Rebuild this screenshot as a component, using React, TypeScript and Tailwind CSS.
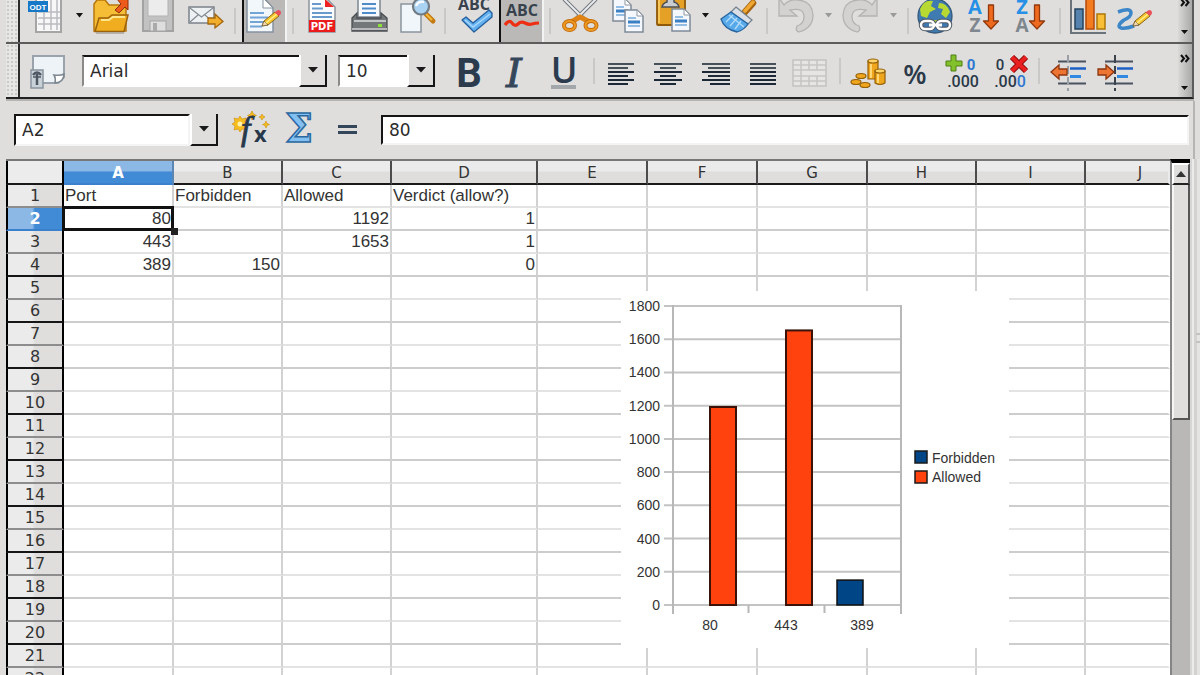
import React from "react";

const COLUMNS = ["A", "B", "C", "D", "E", "F", "G", "H", "I", "J"];
const ROW_COUNT = 40;

const CELLS: Record<string, string> = {
  A1: "Port", B1: "Forbidden", C1: "Allowed", D1: "Verdict (allow?)",
  A2: "80", C2: "1192", D2: "1",
  A3: "443", C3: "1653", D3: "1",
  A4: "389", B4: "150", D4: "0",
};

type IconProps = { x: number; y?: number; h?: number; children: React.ReactNode };

/* x and y set the origin of the toolbar's drawing space for this icon. */
function Icon({ x, y = 0, h = 42, children }: IconProps) {
  return (
    <svg className="block shrink-0" width="47" height={h} viewBox={`${x} ${y} 47 ${h}`} fill="none" aria-hidden="true">
      {children}
    </svg>
  );
}

function Tool({ label, pressed = false, children }: { label: string; pressed?: boolean; children: React.ReactNode }) {
  return (
    <button
      type="button"
      aria-label={label}
      aria-pressed={pressed || undefined}
      className={
        pressed
          ? "h-full w-[47px] shrink-0 bg-[linear-gradient(90deg,#dfdedd_2px,#111_2px,#111_4px,#bab9b8_4px,#bab9b8_45px,#f3f3f3_45px)]"
          : "h-full w-[47px] shrink-0"
      }
    >
      {children}
    </button>
  );
}

function Drop({ label, dim = false }: { label: string; dim?: boolean }) {
  return (
    <button type="button" aria-label={label} className="flex h-full w-[18px] shrink-0 items-start justify-center pt-[13px]">
      <svg width="7" height="5" viewBox="0 0 7 5" aria-hidden="true">
        <path d="M0 0H7L3.5 4.5Z" fill={dim ? "#9a9a9a" : "#151515"} />
      </svg>
    </button>
  );
}

function Sep() {
  return (
    <div className="flex h-full w-[11px] shrink-0 items-center justify-center">
      <div className="h-[26px] w-[2px] bg-[#c9c8c7]" />
    </div>
  );
}

function Grip() {
  return (
    <div className="w-[14px] shrink-0 border-r-2 border-[#2a2a2a] bg-[#e6e6e5] bg-[radial-gradient(#c9c9c8_1px,transparent_1px)] bg-[length:4px_4px]" />
  );
}

function Overflow({ low = false }: { low?: boolean }) {
  return (
    <button
      type="button"
      aria-label="More controls"
      className="ml-auto h-full w-[14px] shrink-0 bg-[linear-gradient(90deg,#d9d9d8,#a9a9a8)]"
    >
      <svg className="block" width="14" height={low ? 52 : 42} viewBox={low ? "0 44 14 52" : "0 0 14 42"} fill="none" aria-hidden="true">
        <path
          d={low ? "M3 54l3 3.5-3 3.5M7.500 54l3 3.5-3 3.500" : "M3-1l3 3.5-3 3.500M7.500-1l3 3.5-3 3.500"}
          stroke="#111"
          strokeWidth="2"
        />
        <path d={low ? "M3 85H10L6.500 89Z" : "M3 30H10L6.500 34Z"} fill="#111" />
      </svg>
    </button>
  );
}

function ArrowFace() {
  return (
    <span className="pointer-events-none flex w-7 shrink-0 items-center justify-center border-r-2 border-b-2 border-l-2 border-[#151515] border-l-white bg-[#dfdedd]">
      <svg width="10" height="6" viewBox="0 0 10 6" aria-hidden="true">
        <path d="M0 0H10L5 5.500Z" fill="#1a1a1a" />
      </svg>
    </span>
  );
}

function Combo({ label, value, wide = false }: { label: string; value: string; wide?: boolean }) {
  return (
    <div className={wide ? "grid h-8 w-[245px] shrink-0" : "grid h-8 w-[97px] shrink-0"}>
      <select
        aria-label={label}
        defaultValue={value}
        className="col-start-1 row-start-1 appearance-none border-2 border-[#8a8a8a] border-t-[#151515] border-r-white border-b-white bg-white pl-[6px] font-['DejaVu_Sans',sans-serif] text-[17px] leading-6 text-[#2c2c2c] outline-none"
      >
        <option>{value}</option>
      </select>
      <div className="pointer-events-none col-start-1 row-start-1 flex justify-end">
        <ArrowFace />
      </div>
    </div>
  );
}

function MiniPage({ x, y }: { x: number; y: number }) {
  return (
    <g>
      <path d={`M${x} ${y}h12l6 6v16h-18z`} fill="#f4f8fc" stroke="#7f8b98" strokeWidth="1.5" />
      <path d={`M${x + 12} ${y}v6h6z`} fill="#fff" stroke="#8d98a4" />
      <path d={`M${x + 3} ${y + 8}h8M${x + 3} ${y + 16}h12`} stroke="#74a9dc" strokeWidth="1.500" />
      <path d={`M${x + 3} ${y + 12}h12`} stroke="#3b7fc4" strokeWidth="3" />
    </g>
  );
}

function Pencil({ x, y }: { x: number; y: number }) {
  return (
    <g transform={`translate(${x} ${y})`}>
      <path d="M0 16L2 11L13 2L17 6L6 15Z" fill="#f6c32c" stroke="#8c6a18" />
      <path d="M0 16L2 11L6 15Z" fill="#f1d9b0" stroke="#66543a" strokeWidth=".7" />
      <path d="M4 13L15 4" stroke="#fff08a" strokeWidth="1.500" />
      <path d="M12.500 2.500L15 .5Q17-1 18.500 1.200Q20 3.500 17 6Z" fill="#e8505c" />
    </g>
  );
}

function DownArrow({ x }: { x: number }) {
  return (
    <path
      d={`M${x - 2.500} 5h5v16h5l-7.500 8l-7.500-8h5z`}
      fill="#ee6a1e"
      stroke="#92390d"
      strokeWidth="1.300"
      strokeLinejoin="round"
    />
  );
}

function StandardBar() {
  return (
    <div role="toolbar" aria-label="Standard" className="flex h-[42px] min-w-0 grow items-start overflow-hidden pl-[3px]">
      <Tool label="New">
        <Icon x={23}>
          <rect x="36" y="-2" width="25" height="34" fill="#f7f7f7" stroke="#a5a5a5" strokeWidth="2" />
          <path d="M38 12H60M38 18H60M38 24H60M44 0V30M51 0V30M57 0V30" stroke="#b9bcc0" strokeWidth="1.500" />
          <rect x="28" y="1" width="20" height="11" fill="#1778c8" />
          <text x="38" y="10" textAnchor="middle" fontFamily="Liberation Sans, sans-serif" fontWeight="700" fontSize="8" fill="#fff">ODT</text>
        </Icon>
      </Tool>
      <Drop label="New options" />
      <Tool label="Open">
        <Icon x={88}>
          <path d="M94 31V4L97 0H105L109 5H126V31Z" fill="#f4bd35" stroke="#b8770c" strokeWidth="1.500" />
          <path d="M95 31.500L99 18H108L112 15H128L124 31.500Z" fill="#f0ad20" stroke="#9c620a" strokeWidth="1.500" />
          <path d="M101 20H109L113 17H125" stroke="#ffe58c" strokeWidth="2" />
          <path d="M96 33H124" stroke="#a8a29a" strokeWidth="1.500" />
          <path d="M115 10L121 4L117-1H128V10L125 7L119 13Z" fill="#ec5a1c" stroke="#8e2d0a" />
        </Icon>
      </Tool>
      <Tool label="Save">
        <Icon x={135}>
          <path d="M143-2H173V31H143Z" fill="#c2c2c2" stroke="#a2a2a2" strokeWidth="2" />
          <rect x="148" y="-2" width="20" height="18" fill="#ececec" stroke="#b3b3b3" />
          <rect x="150" y="21" width="16" height="10" fill="#dedede" stroke="#a6a6a6" />
          <rect x="153" y="23" width="4" height="8" fill="#aaa" />
        </Icon>
      </Tool>
      <Tool label="Send by e-mail">
        <Icon x={182}>
          <rect x="189" y="7" width="25" height="16" fill="#eef1f3" stroke="#7b8289" strokeWidth="1.500" />
          <path d="M190 8L201.500 17L213 8M190 22L198 15M213 22L205 15" stroke="#838b93" strokeWidth="1.200" />
          <path d="M208 18H215V14L223 21.500L215 28V24H208Z" fill="#f0ae2c" stroke="#a3650e" strokeWidth="1.300" />
        </Icon>
      </Tool>
      <Sep />
      <Tool label="Edit file" pressed>
        <Icon x={240}>
          <path d="M247-2H264L273 8V32H247Z" fill="#f2f7fc" stroke="#8793a0" strokeWidth="1.500" />
          <path d="M263-2V8H273Z" fill="#fff" stroke="#8793a0" />
          <path d="M250 13H264M250 17.500H268M250 22H268M250 26.500H262" stroke="#72a4d6" strokeWidth="1.800" />
          <Pencil x={262} y={10} />
        </Icon>
      </Tool>
      <Sep />
      <Tool label="Export as PDF">
        <Icon x={298}>
          <path d="M309-2H326L335 7V32H309Z" fill="#fbfcfd" stroke="#8c949c" strokeWidth="1.500" />
          <path d="M325-1V7H334Z" fill="#ee2222" />
          <path d="M312 4H321M312 8.500H323M312 13H332M312 17H332" stroke="#6a99cc" strokeWidth="1.800" />
          <rect x="309" y="20" width="26" height="12" fill="#ea1c1c" />
          <text x="322" y="30" textAnchor="middle" fontFamily="DejaVu Sans, sans-serif" fontWeight="700" fontSize="10" fill="#fff">PDF</text>
        </Icon>
      </Tool>
      <Tool label="Print">
        <Icon x={345}>
          <path d="M358 17V-2H380V17Z" fill="#f7fafd" stroke="#7d8790" strokeWidth="1.500" />
          <path d="M362 4H376M362 8.500H376M362 13H376" stroke="#4e8cc9" strokeWidth="1.800" />
          <path d="M352 18L357 13V18H381V13L387 18V31H352Z" fill="#73777a" stroke="#4b4e51" strokeWidth="1.300" />
          <path d="M354 21H386" stroke="#c2c5c7" strokeWidth="2" />
          <path d="M352 29H387" stroke="#b6b8ba" strokeWidth="2" />
          <rect x="378" y="24" width="4" height="3" fill="#8de03a" />
        </Icon>
      </Tool>
      <Tool label="Page preview">
        <Icon x={392}>
          <rect x="401" y="4" width="20" height="28" fill="#f1f6fb" stroke="#8b949d" strokeWidth="1.500" />
          <path d="M426 14L433 21" stroke="#c27a11" strokeWidth="5" strokeLinecap="round" />
          <path d="M426 14L432 20" stroke="#f6b83c" strokeWidth="2" />
          <circle cx="421" cy="6.500" r="8" fill="#a9d2f3" stroke="#727b84" strokeWidth="2.200" />
          <path d="M416 6Q418 1 424 2" stroke="#f4faff" strokeWidth="2.500" />
        </Icon>
      </Tool>
      <Sep />
      <Tool label="Spelling and grammar">
        <Icon x={450}>
          <text x="474" y="10" textAnchor="middle" fontFamily="Open Sans, sans-serif" fontWeight="700" fontSize="16" fill="#38424c">ABC</text>
          <path d="M462 20L466 17L473 23L489 10L492 13V17L474 32Z" fill="#63b0f0" stroke="#245f9c" strokeWidth="1.300" strokeLinejoin="round" />
          <path d="M465 20L473 27L490 14" stroke="#a9d7fb" strokeWidth="1.500" />
        </Icon>
      </Tool>
      <Tool label="Automatic spell check" pressed>
        <Icon x={497}>
          <text x="522" y="16" textAnchor="middle" fontFamily="Open Sans, sans-serif" fontWeight="700" fontSize="16" fill="#38424c">ABC</text>
          <path d="M505 25Q509 19 512 23T518 24T525 23T532 24T539 23" stroke="#ee2e12" strokeWidth="3.200" />
        </Icon>
      </Tool>
      <Sep />
      <Tool label="Cut">
        <Icon x={555}>
          <path d="M564-1L585 20M596-1L575 20" stroke="#74797e" strokeWidth="4" />
          <path d="M564-1L584 19M596-1L576 19" stroke="#e8eaec" strokeWidth="2" />
          <path d="M571 22L580 17L590 22" stroke="#df8414" strokeWidth="5" />
          <ellipse cx="569.500" cy="25.500" rx="5.500" ry="4.500" stroke="#c56d0c" strokeWidth="4" />
          <ellipse cx="591" cy="25.500" rx="5.500" ry="4.500" stroke="#c56d0c" strokeWidth="4" />
          <ellipse cx="569.500" cy="25.500" rx="5.500" ry="4.500" stroke="#ee9a22" strokeWidth="2" />
          <ellipse cx="591" cy="25.500" rx="5.500" ry="4.500" stroke="#ee9a22" strokeWidth="2" />
        </Icon>
      </Tool>
      <Tool label="Copy">
        <Icon x={602}>
          <MiniPage x={613} y={-1} />
          <MiniPage x={625} y={10} />
        </Icon>
      </Tool>
      <Tool label="Paste">
        <Icon x={649}>
          <rect x="657" y="-2" width="28" height="27" rx="1" fill="#e5a125" stroke="#8f5908" strokeWidth="1.800" />
          <path d="M659 0V23" stroke="#ffd36a" strokeWidth="1.500" />
          <path d="M662 7Q663 3 667 2V-2H674V2Q678 3 679 7Z" fill="#c9cdd1" stroke="#4c5157" strokeWidth="1.500" />
          <MiniPage x={672} y={9} />
        </Icon>
      </Tool>
      <Drop label="Paste options" />
      <Tool label="Clone formatting">
        <Icon x={714}>
          <path d="M745 12L753 3" stroke="#a66410" strokeWidth="6.500" strokeLinecap="round" />
          <path d="M745 11L753 2" stroke="#f0a832" strokeWidth="3.500" strokeLinecap="round" />
          <path d="M736 7L752 20L747 25L731 12Z" fill="#d9dfe4" stroke="#76818b" strokeWidth="1.300" />
          <path d="M731 12L721 19Q724 29 737 32Q744 30 748 24Z" fill="#58a9ea" stroke="#28649f" strokeWidth="1.300" />
          <path d="M733 15L726 22M737 18L730 26M741 21L735 29M729 15L744 27" stroke="#b2dcfb" strokeWidth="1.300" />
        </Icon>
      </Tool>
      <Sep />
      <Tool label="Undo">
        <Icon x={772}>
          <path d="M779-2V16H797L790 10Q804 7 804 17Q804 24 797 26Q795 31 799 32Q813 28 813 15Q812 1 798 0Q789-1 784 5Z" fill="#d3d2d1" stroke="#b4b3b2" strokeWidth="1.300" />
        </Icon>
      </Tool>
      <Drop label="Undo history" dim />
      <Tool label="Redo">
        <Icon x={837}>
          <path d="M877-2V16H859L866 10Q852 7 852 17Q852 24 859 26Q861 31 857 32Q843 28 843 15Q844 1 858 0Q867-1 872 5Z" fill="#d3d2d1" stroke="#b4b3b2" strokeWidth="1.300" />
        </Icon>
      </Tool>
      <Drop label="Redo history" dim />
      <Sep />
      <Tool label="Hyperlink">
        <Icon x={913}>
          <circle cx="935" cy="16" r="17" fill="#3f7ab0" stroke="#355a7c" strokeWidth="1.300" />
          <path d="M920 9Q924-1 933 1L931 6L936 9L930 12L927 18L921 16ZM939 3Q947 3 950 12L946 18L941 14L943 9L938 8Z" fill="#b7d932" />
          <path d="M933 20H940L937 28Z" fill="#a3cd38" />
          <rect x="921" y="21" width="13" height="8" rx="4" stroke="#4f5a64" strokeWidth="4.500" />
          <rect x="937" y="21" width="13" height="8" rx="4" stroke="#4f5a64" strokeWidth="4.500" />
          <rect x="921" y="21" width="13" height="8" rx="4" stroke="#fff" strokeWidth="2.500" />
          <rect x="937" y="21" width="13" height="8" rx="4" stroke="#fff" strokeWidth="2.500" />
          <path d="M929 25H942" stroke="#fff" strokeWidth="3" />
        </Icon>
      </Tool>
      <Tool label="Sort ascending">
        <Icon x={960}>
          <text x="975" y="14" textAnchor="middle" fontFamily="Open Sans, sans-serif" fontWeight="700" fontSize="20" fill="#2690e6">A</text>
          <text x="975" y="32" textAnchor="middle" fontFamily="Open Sans, sans-serif" fontWeight="700" fontSize="19" fill="#7e868e">Z</text>
          <DownArrow x={991} />
        </Icon>
      </Tool>
      <Tool label="Sort descending">
        <Icon x={1007}>
          <text x="1022" y="14" textAnchor="middle" fontFamily="Open Sans, sans-serif" fontWeight="700" fontSize="20" fill="#2690e6">Z</text>
          <text x="1022" y="32" textAnchor="middle" fontFamily="Open Sans, sans-serif" fontWeight="700" fontSize="19" fill="#7e868e">A</text>
          <DownArrow x={1037} />
        </Icon>
      </Tool>
      <Sep />
      <Tool label="Insert chart">
        <Icon x={1065}>
          <path d="M1071-2V33H1106" stroke="#6b737b" strokeWidth="2" />
          <rect x="1075" y="9" width="8" height="20" fill="#5683ad" stroke="#24435f" strokeWidth="1.500" />
          <rect x="1086" y="-2" width="8" height="31" fill="#f47c20" stroke="#b64a08" strokeWidth="1.500" />
          <rect x="1097" y="14" width="8" height="15" fill="#f8bf36" stroke="#ae7708" strokeWidth="1.500" />
        </Icon>
      </Tool>
      <Tool label="Show draw functions">
        <Icon x={1112}>
          <path d="M1118 12Q1131 7 1131 13Q1131 17 1124 20Q1116 26 1121 28Q1126 29 1134 26" stroke="#3d87c9" strokeWidth="3.500" />
          <Pencil x={1133} y={10} />
        </Icon>
      </Tool>
      <Overflow />
    </div>
  );
}

const ALIGN: { label: string; x: number; left: number[]; right: number[] }[] = [
  { label: "Align left", x: 597, left: [608, 608, 608, 608, 608, 608], right: [634, 628, 634, 628, 634, 628] },
  { label: "Align centre", x: 644, left: [654, 660, 654, 660, 654, 660], right: [682, 676, 682, 676, 682, 676] },
  { label: "Align right", x: 691, left: [702, 708, 702, 708, 702, 710], right: [730, 730, 730, 730, 730, 730] },
  { label: "Justify", x: 738, left: [750, 750, 750, 750, 750, 750], right: [776, 776, 776, 776, 776, 776] },
];

function Indent({ x, out = false }: { x: number; out?: boolean }) {
  return (
    <g>
      <path d={`M${x - 10} 60.500h28M${x - 10} 82.500h28`} stroke="#4a5360" strokeWidth="2" />
      <path d={`M${x + 2} 67.500h16`} stroke="#1d5fc4" strokeWidth="2.500" />
      <path d={`M${x + 2} 75.500h11`} stroke="#3089e0" strokeWidth="3" />
      <path d={`M${x} 54v36`} stroke={out ? "#9aa0a6" : "#3a424b"} strokeWidth="2" strokeDasharray="8 3" />
      <path
        d={out ? `M${x - 17} 71l8-7v4h8v6h-8v4z` : `M${x - 1} 71l-8-7v4h-8v6h8v4z`}
        fill="#ee7433"
        stroke="#8c3610"
        strokeWidth="1.300"
      />
    </g>
  );
}

function FormattingBar() {
  const row = { y: 44, h: 52 };
  return (
    <div role="toolbar" aria-label="Formatting" className="flex h-[53px] min-w-0 grow items-center overflow-hidden pl-[3px]">
      <Tool label="Styles and formatting">
        <Icon x={23} {...row}>
          <path d="M33 55H64V76L58 82H33Z" fill="#eef3f8" stroke="#9aa3ac" strokeWidth="2" />
          <path d="M55 82Q56 77 54 74Q60 75 64 73Q64 81 55 82Z" fill="#fff" stroke="#7d8790" strokeWidth="1.500" />
          <rect x="31" y="69" width="12" height="18" fill="#c8d0d8" stroke="#8a949e" strokeWidth="1.500" />
          <path d="M33 74Q37 69 41 74M37 73V84" stroke="#4c5762" strokeWidth="2.500" />
          <path d="M33 76H41" stroke="#4c5762" strokeWidth="1.500" />
        </Icon>
      </Tool>
      <div className="flex shrink-0 gap-[11px] px-3">
        <Combo label="Font name" value="Arial" wide />
        <Combo label="Font size" value="10" />
      </div>
      <Tool label="Bold">
        <Icon x={447} {...row}>
          <text x="469" y="86" textAnchor="middle" fontFamily="Roboto, sans-serif" fontWeight="700" fontSize="40" fill="#2b3b4d">B</text>
        </Icon>
      </Tool>
      <Tool label="Italic">
        <Icon x={494} {...row}>
          <text x="514" y="86" textAnchor="middle" fontFamily="DejaVu Serif, serif" fontStyle="italic" fontSize="40" fill="#36465a" stroke="#36465a" strokeWidth="1">I</text>
        </Icon>
      </Tool>
      <Tool label="Underline">
        <Icon x={541} {...row}>
          <text x="564" y="82" textAnchor="middle" fontFamily="Open Sans, sans-serif" fontWeight="600" fontSize="36" fill="#2b3b4d">U</text>
          <rect x="551" y="84" width="25" height="4" fill="#a2a7ac" />
        </Icon>
      </Tool>
      <Sep />
      {ALIGN.map((a) => (
        <Tool key={a.label} label={a.label}>
          <Icon x={a.x + 2} {...row}>
            {a.left.map((l, i) => (
              <path key={i} d={`M${l} ${63 + i * 4}H${a.right[i]}`} stroke={i < 2 ? "#465057" : "#1c2836"} strokeWidth="2" />
            ))}
          </Icon>
        </Tool>
      ))}
      <Tool label="Merge and centre cells">
        <Icon x={787} {...row}>
          <rect x="793" y="59" width="33" height="26" fill="#e6e5e4" stroke="#c3c2c1" strokeWidth="1.500" />
          <path d="M793 64H826M793 69H826M793 75H826M793 80H826M801 59V85M809 59V69M809 75V85M817 59V69M817 75V85" stroke="#c6c5c4" strokeWidth="1.500" />
        </Icon>
      </Tool>
      <Sep />
      <Tool label="Currency format">
        <Icon x={845} {...row}>
          <g fill="#efa51c" stroke="#94600a" strokeWidth="1.200">
            <path d="M868 60V78H878V60Z" />
            <ellipse cx="873" cy="60" rx="5" ry="2" fill="#ffd468" />
            <path d="M875 70V82Q880 85 885 82V70Z" />
            <ellipse cx="880" cy="70" rx="5" ry="2" fill="#ffd468" />
            <ellipse cx="861" cy="75" rx="5" ry="2.500" />
            <ellipse cx="856" cy="81" rx="5" ry="2.500" />
            <ellipse cx="865" cy="84" rx="5" ry="2.500" />
          </g>
          <path d="M871 63V77M878 73V82" stroke="#ffd875" strokeWidth="2" />
        </Icon>
      </Tool>
      <Tool label="Percent format">
        <Icon x={892} {...row}>
          <text x="915" y="83" textAnchor="middle" fontFamily="Open Sans, sans-serif" fontWeight="600" fontSize="27" fill="#2b3948">%</text>
        </Icon>
      </Tool>
      <Tool label="Add decimal place">
        <Icon x={939} {...row}>
          <path d="M951 54H956V60H962V65H956V70H951V65H946V60H951Z" fill="#82c02c" stroke="#4e7e12" />
          <text x="971" y="69" textAnchor="middle" fontFamily="Roboto, sans-serif" fontWeight="700" fontSize="15" fill="#2f78d0">0</text>
          <text x="963" y="86" textAnchor="middle" fontFamily="Roboto, sans-serif" fontWeight="500" fontSize="16" fill="#2b3948">.000</text>
        </Icon>
      </Tool>
      <Tool label="Delete decimal place">
        <Icon x={986} {...row}>
          <text x="1000" y="69" textAnchor="middle" fontFamily="Roboto, sans-serif" fontWeight="500" fontSize="15" fill="#2b3948">0</text>
          <path d="M1012 56L1026 70M1026 56L1012 70" stroke="#8e0b0b" strokeWidth="6" />
          <path d="M1012 56L1026 70M1026 56L1012 70" stroke="#e82020" strokeWidth="4" />
          <text x="1010" y="86" textAnchor="middle" fontFamily="Roboto, sans-serif" fontWeight="500" fontSize="16" fill="#2b3948">
            .00<tspan fill="#2f78d0">0</tspan>
          </text>
        </Icon>
      </Tool>
      <Sep />
      <Tool label="Decrease indent">
        <Icon x={1044} {...row}><Indent x={1068} out /></Icon>
      </Tool>
      <Tool label="Increase indent">
        <Icon x={1091} {...row}><Indent x={1115} /></Icon>
      </Tool>
      <Overflow low />
    </div>
  );
}

function FormulaBar() {
  const row = { y: 106, h: 50 };
  const field = "min-w-0 border-2 border-[#151515] border-r-[#f4f4f4] border-b-[#f4f4f4] bg-white pl-[6px] font-['DejaVu_Sans',sans-serif] text-[17px] leading-6 text-[#2c2c2c] outline-none";
  return (
    <div className="mr-[5px] ml-[6px] flex h-[58px] shrink-0 items-center border-r-2 border-[#b5b4b3] pr-1 pl-2">
      <div className="flex h-8 w-[204px] shrink-0">
        <input aria-label="Name box" defaultValue="A2" className={`${field} grow`} />
        <button type="button" aria-label="Choose range" className="flex"><ArrowFace /></button>
      </div>
      <div className="flex px-[11px]">
        <Tool label="Function wizard">
          <Icon x={229} {...row}>
            <g fill="#f7bd1e" stroke="#c98d0a" strokeWidth=".6">
              <path d="M240 117l2 3 4-1-1 4 3 2-3 2 1 4-4-1-2 3-2-3-4 1 1-4-3-2 3-2-1-4 4 1z" />
              <path d="M252 112l1.500 3 3 1.500-3 1.500-1.500 3-1.500-3-3-1.500 3-1.500zM262 115l1 2 2 1-2 1-1 2-1-2-2-1 2-1zM266 122l1 2.500 2.500 1-2.500 1-1 2.500-1-2.500-2.500-1 2.500-1z" />
            </g>
            <circle cx="240" cy="125" r="2.500" fill="#fff3b0" />
            <text x="241" y="141" fontFamily="Liberation Serif, serif" fontStyle="italic" fontSize="34" fill="#27384a" stroke="#27384a" strokeWidth=".8">f</text>
            <text x="254" y="143" fontFamily="Open Sans, sans-serif" fontWeight="700" fontSize="22" fill="#27384a">x</text>
          </Icon>
        </Tool>
        <Tool label="Sum">
          <Icon x={276} {...row}>
            <text x="299" y="143" textAnchor="middle" fontFamily="DejaVu Serif, serif" fontWeight="700" fontSize="39" fill="#83bff0" stroke="#2a689f" strokeWidth="1.500">Σ</text>
          </Icon>
        </Tool>
        <Tool label="Function">
          <Icon x={323} {...row}>
            <rect x="338" y="126" width="19" height="3" fill="#34465a" />
            <rect x="338" y="132" width="19" height="3" fill="#34465a" />
          </Icon>
        </Tool>
      </div>
      <input aria-label="Input line" defaultValue="80" className={`${field} h-[30px] grow`} />
    </div>
  );
}

const HEAD = "relative h-6 border-r-2 border-b-2 border-b-[#1a1a1a] p-0 pt-[2px] text-center font-['DejaVu_Sans',sans-serif] text-[15px] leading-5";

function Grid() {
  const rows = Array.from({ length: ROW_COUNT }, (_, i) => i + 1);
  return (
    <table className="w-full table-fixed border-separate border-spacing-0 bg-white">
      <colgroup>
        <col className="w-[58px]" />
        <col className="w-[110px]" />
        <col className="w-[109px]" />
        <col className="w-[109px]" />
        <col className="w-[146px]" />
        <col className="w-[110px]" />
        <col className="w-[110px]" />
        <col className="w-[110px]" />
        <col className="w-[109px]" />
        <col className="w-[109px]" />
        <col />
      </colgroup>
      <thead>
        <tr>
          <th aria-label="Select all" className={`${HEAD} border-r-black border-l-2 border-l-black bg-[#ececec]`} />
          {COLUMNS.map((c) => (
            <th
              key={c}
              scope="col"
              className={
                c === "A"
                  ? `${HEAD} border-r-[#5d86b3] border-b-[#3a80cc] bg-[linear-gradient(#8cb8e6_45%,#418ad6_50%)] font-bold text-white`
                  : c === "J"
                    ? `${HEAD} border-r-[#eaeaea] bg-[linear-gradient(#ebebeb_45%,#dfdedd_50%)] pl-[26px] font-normal text-[#333]`
                    : `${HEAD} border-r-[#4c4c4c] bg-[linear-gradient(#ebebeb_45%,#dfdedd_50%)] font-normal text-[#333]`
              }
            >
              {c}
            </th>
          ))}
        </tr>
      </thead>
      <tbody>
        {rows.map((n) => (
          <tr key={n}>
            <th
              scope="row"
              className={`h-[23px] border-r-2 border-b-2 border-l-2 border-r-black border-l-black p-0 pt-[1px] text-center font-['DejaVu_Sans',sans-serif] text-[16px] leading-5 ${
                n === 2
                  ? "border-b-[#3a80cc] bg-[linear-gradient(90deg,#8cb8e6_45%,#418ad6_50%)] font-bold text-white"
                  : n % 2 === 0
                    ? "border-b-[#161616] bg-[linear-gradient(90deg,#ebebeb_45%,#dfdedd_50%)] font-normal text-[#333]"
                    : "border-b-[#8d8d8d] bg-[linear-gradient(90deg,#ebebeb_45%,#dfdedd_50%)] font-normal text-[#333]"
              }`}
            >
              {n}
            </th>
            {COLUMNS.map((c) => (
              <td
                key={c}
                className={`relative h-[23px] border-r-2 border-b-2 p-0 px-[1px] pt-[1px] font-['Liberation_Sans',Arial,sans-serif] text-[17px] leading-5 whitespace-nowrap text-[#333] ${
                  c === "J" ? "border-r-white" : "border-r-[#d2d2d2]"
                } ${n % 2 === 0 ? "border-b-[#cdcdcd]" : "border-b-[#e3e3e3]"} ${n === 1 ? "text-left" : "text-right"}`}
              >
                {CELLS[c + n]}
                {c === "A" && n === 2 && (
                  <>
                    <span className="absolute -inset-[2px] border-[3px] border-[#111]" />
                    <span className="absolute -right-[6px] -bottom-[6px] z-10 size-[7px] bg-[#222]" />
                  </>
                )}
              </td>
            ))}
          </tr>
        ))}
      </tbody>
    </table>
  );
}

const SERIES = [
  { port: "80", forbidden: 0, allowed: 1192 },
  { port: "443", forbidden: 0, allowed: 1653 },
  { port: "389", forbidden: 150, allowed: 0 },
];

function Chart() {
  const base = 314;
  const top = 15;
  const scale = (v: number) => base - (v * (base - top)) / 1800;
  const font = "Liberation Sans, Arial, sans-serif";
  return (
    <svg className="block bg-white" width="388" height="357" viewBox="0 0 388 357" role="img" aria-label="Forbidden and allowed by port">
      {Array.from({ length: 10 }, (_, i) => i * 200).map((v) => (
        <g key={v}>
          <path d={`M43 ${scale(v)}H280`} stroke="#c3c3c3" strokeWidth="2" />
          <text x="39" y={scale(v) + 5} textAnchor="end" fontFamily={font} fontSize="14" fill="#333">{v}</text>
        </g>
      ))}
      <path d="M52 14V323M280 14V323M127.500 314V322M203.500 314V322" stroke="#b8b8b8" strokeWidth="2" />
      {SERIES.map((s, i) => {
        const left = 62 + i * 76;
        return (
          <g key={s.port}>
            {s.forbidden > 0 && (
              <rect x={left + 2} y={scale(s.forbidden)} width="26" height={base - scale(s.forbidden)} fill="#004586" stroke="#111" strokeWidth="1.500" />
            )}
            {s.allowed > 0 && (
              <rect x={left + 27} y={scale(s.allowed)} width="26" height={base - scale(s.allowed)} fill="#ff420e" stroke="#3a1208" strokeWidth="2" />
            )}
            <text x={left + 27} y="339" textAnchor="middle" fontFamily={font} fontSize="14" fill="#333">{s.port}</text>
          </g>
        );
      })}
      <rect x="294" y="160" width="12" height="12" fill="#004586" stroke="#1a1a1a" strokeWidth="1.500" />
      <rect x="294" y="180" width="12" height="12" fill="#ff420e" stroke="#1a1a1a" strokeWidth="1.500" />
      <text x="311" y="172" fontFamily={font} fontSize="14" fill="#333">Forbidden</text>
      <text x="311" y="191" fontFamily={font} fontSize="14" fill="#333">Allowed</text>
    </svg>
  );
}

function ScrollBar() {
  return (
    <div className="flex w-[20px] shrink-0 flex-col border-t-4 border-l-2 border-t-black border-l-[#858585] bg-[#b9b8b7]">
      <button
        type="button"
        aria-label="Scroll up"
        className="flex h-[22px] shrink-0 items-center justify-center border-2 border-[#555] border-t-white border-b-[#222] border-l-white bg-[#dfdedd]"
      >
        <svg width="10" height="6" viewBox="0 0 10 6" aria-hidden="true">
          <path d="M0 6H10L5 0Z" fill="#333" />
        </svg>
      </button>
      <div className="h-[235px] shrink-0 border-r-2 border-b-2 border-l-2 border-[#555] border-l-[#f5f5f5] bg-[#dfdedd]" />
    </div>
  );
}

export default function App() {
  return (
    <div className="flex h-screen w-full flex-col overflow-hidden bg-[#dfdedd]">
      <header className="flex shrink-0 flex-col">
        <div className="mr-[6px] ml-[6px] flex border-r-2 border-b-2 border-[#5c5c5c]">
          <Grip />
          <StandardBar />
        </div>
        <div className="mr-[6px] ml-[6px] flex border-r-2 border-b-2 border-r-[#5c5c5c] border-b-[#222]">
          <Grip />
          <FormattingBar />
        </div>
        <div className="mr-[6px] ml-[6px] h-[2px] bg-[#b5b4b3]" />
        <FormulaBar />
      </header>
      <main className="flex min-h-0 grow pl-[6px]">
        <div className="relative min-w-0 grow overflow-hidden border-t-2 border-[#777]">
          <Grid />
          <div className="absolute top-[130px] left-[615px]">
            <Chart />
          </div>
        </div>
        <ScrollBar />
        <div className="flex w-[10px] shrink-0 flex-col items-end bg-[linear-gradient(90deg,#d6d6d5_2px,#ebebea_2px,#ebebea_4px,#d3d2d1_4px,#d3d2d1_7px,#e4e4e3_7px)] pt-[174px]">
          <div className="h-[10px] w-[4px] border-y-2 border-[#c3c2c1]" />
        </div>
      </main>
    </div>
  );
}
